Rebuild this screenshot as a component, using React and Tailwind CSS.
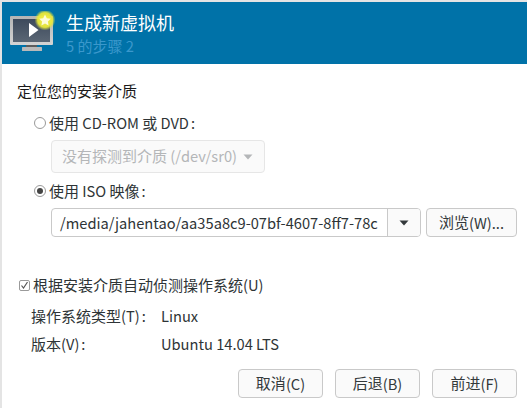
import React from "react";

// The reference's CJK glyphs advance a whole 15px while its Latin glyphs stay at 14.67px.
function T({ children }) {
  const runs = String(children).split(/([\u3400-\u9fff]+|:)/).filter(Boolean);
  return (
    <>
      {runs.map((run, i) =>
        run === ":" ? (
          <span key={i} className="ml-[2px]">{run}</span>
        ) : /[\u3400-\u9fff]/.test(run) ? (
          <span key={i} className="text-[15px]">{run}</span>
        ) : (
          <span key={i}>{run}</span>
        )
      )}
    </>
  );
}

function Btn({ children, className = "" }) {
  return (
    <div className={"h-[29px] flex items-center justify-center rounded-[4px] border border-[#c9c9c9] bg-[#fafafa] text-[#33393b] text-[14.67px] whitespace-pre " + className}>
      <T>{children}</T>
    </div>
  );
}

function Arrow({ color = "#33393b" }) {
  return (
    <svg width="10" height="6" viewBox="0 0 10 6" className="block">
      <path d="M0.5 0.5H9.5L5 5.5Z" fill={color} />
    </svg>
  );
}

function Logo() {
  return (
    <svg width="48" height="48" viewBox="0 0 48 48" className="block">
      <defs>
        <radialGradient id="glow" cx="0.5" cy="0.5" r="0.5">
          <stop offset="0" stopColor="#f6f24a" />
          <stop offset="0.7" stopColor="#e8e83a" stopOpacity="0.95" />
          <stop offset="1" stopColor="#d8e040" stopOpacity="0" />
        </radialGradient>
        <linearGradient id="scr" x1="0" y1="0" x2="0" y2="1">
          <stop offset="0" stopColor="#3d4a5c" />
          <stop offset="1" stopColor="#5a6674" />
        </linearGradient>
        <linearGradient id="frm" x1="0" y1="0" x2="0" y2="1">
          <stop offset="0" stopColor="#b4b4b4" />
          <stop offset="1" stopColor="#d4d4d4" />
        </linearGradient>
      </defs>
      <rect x="0" y="5" width="43" height="29" rx="1" fill="url(#frm)" />
      <rect x="3" y="8" width="37" height="23" fill="url(#scr)" />
      <rect x="16" y="34" width="11" height="2" fill="#5d5d5d" />
      <rect x="12" y="36" width="20" height="4" rx="0.5" fill="#b9b9b9" />
      <path d="M19 12V26L28.5 19Z" fill="#ffffff" />
      <circle cx="35" cy="9" r="10.5" fill="url(#glow)" />
      <path d="M35 3.5L36.8 7.2L40.8 7.7L37.9 10.5L38.6 14.5L35 12.6L31.4 14.5L32.1 10.5L29.2 7.7L33.2 7.2Z" fill="#fdfcd8" />
    </svg>
  );
}

export default function App() {
  return (
    <div
      className="w-[527px] h-[408px] overflow-hidden bg-white text-[14.67px] text-[#2e3436] flex flex-col border-l-2 border-t-2 border-[#e4e4e4]"
      style={{ fontFamily: '"Noto Sans CJK SC", "Noto Sans", sans-serif' }}
    >
      <div className="h-[62px] bg-[#0072a8] flex items-start shrink-0">
        <div className="ml-[8px] mt-[9px] w-[48px] shrink-0"><Logo /></div>
        <div className="ml-[8px] mt-[8px] flex flex-col">
          <div className="text-[18px] leading-[24px] text-white">生成新虚拟机</div>
          <div className="leading-[20px] mt-[2px] text-[#3b98cc]"><T>5 的步骤 2</T></div>
        </div>
      </div>

      <div className="flex-1 flex flex-col pl-[15px] pr-[10px]">
        <div className="leading-[20px] mt-[17px] text-[#1a1a1a]"><T>定位您的安装介质</T></div>

        <div className="ml-[17px] mt-[12px] flex items-center h-[20px]">
          <span className="w-[12px] h-[12px] rounded-full border border-[#9a9a9a] bg-white mr-[3px] shrink-0" />
          <span className="whitespace-pre"><T>使用 CD-ROM 或 DVD:</T></span>
        </div>

        <div className="ml-[34px] mt-[7px] w-[214px] h-[33px] rounded-[4px] border border-[#e6e6e6] bg-[#fafafa] flex items-center pl-[10px] text-[#b4b6b8]">
          <span className="whitespace-pre"><T>没有探测到介质 (/dev/sr0)</T></span>
          <span className="ml-[6px]"><Arrow color="#b4b6b8" /></span>
        </div>

        <div className="ml-[17px] mt-[8px] flex items-center h-[20px]">
          <span className="w-[12px] h-[12px] rounded-full border border-[#9a9a9a] bg-white mr-[3px] flex items-center justify-center shrink-0">
            <span className="w-[6px] h-[6px] rounded-full bg-[#444]" />
          </span>
          <span className="whitespace-pre"><T>使用 ISO 映像:</T></span>
        </div>

        <div className="ml-[34px] mt-[7px] flex items-center">
          <div className="w-[370px] h-[29px] rounded-[4px] border border-[#c9c9c9] bg-white flex overflow-hidden">
            <div className="w-[335px] overflow-hidden whitespace-nowrap pl-[8px] leading-[27px]">/media/jahentao/aa35a8c9-07bf-4607-8ff7-78c</div>
            <div className="flex-1 border-l border-[#c9c9c9] bg-[#fafafa] flex items-center justify-center"><Arrow /></div>
          </div>
          <Btn className="w-[91px] ml-[5px]">浏览(W)...</Btn>
        </div>

        <div className="ml-[2px] mt-[38px] flex items-center h-[20px]">
          <span className="w-[11px] h-[11px] rounded-[2px] border border-[#9a9a9a] bg-white mr-[3px] flex items-center justify-center shrink-0">
            <svg width="9" height="9" viewBox="0 0 9 9" className="block"><path d="M1.5 4.5L3.5 7L7.5 1" fill="none" stroke="#555" strokeWidth="1.2" /></svg>
          </span>
          <span className="whitespace-pre"><T>根据安装介质自动侦测操作系统(U)</T></span>
        </div>

        <div className="ml-[14px] mt-[11px] flex items-center h-[20px]">
          <span className="w-[130px] shrink-0 whitespace-pre"><T>操作系统类型(T):</T></span>
          <span>Linux</span>
        </div>
        <div className="ml-[14px] mt-[8px] flex items-center h-[20px]">
          <span className="w-[130px] shrink-0 whitespace-pre"><T>版本(V):</T></span>
          <span>Ubuntu 14.04 LTS</span>
        </div>

        <div className="mt-[15px] flex justify-end gap-[12px]">
          <Btn className="w-[85px]">取消(C)</Btn>
          <Btn className="w-[85px]">后退(B)</Btn>
          <Btn className="w-[85px]">前进(F)</Btn>
        </div>
      </div>
    </div>
  );
}
